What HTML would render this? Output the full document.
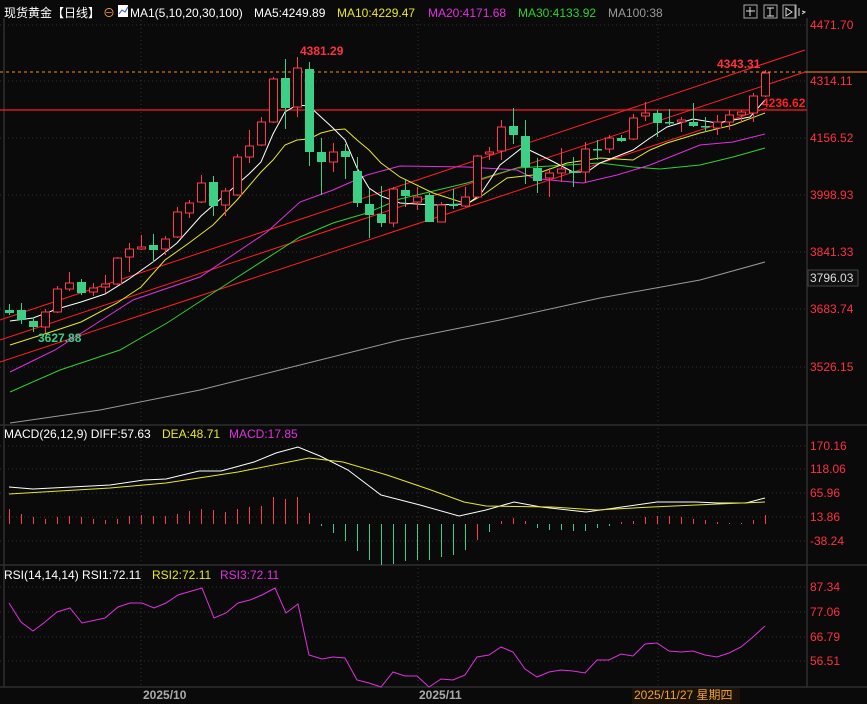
<!DOCTYPE html>
<html><head><meta charset="utf-8"><style>
html,body{margin:0;padding:0;background:#0a0a0a;width:867px;height:704px;overflow:hidden}
svg{display:block}
text{font-family:"Liberation Sans","Noto Sans CJK SC",sans-serif;font-size:12px}
</style></head><body>
<svg id="c" width="867" height="704" xmlns="http://www.w3.org/2000/svg">
<rect width="867" height="704" fill="#0a0a0a"/>
<g stroke="#333" stroke-dasharray="1,3" stroke-width="1">
<line x1="0" y1="25" x2="807" y2="25"/><line x1="0" y1="81" x2="807" y2="81"/><line x1="0" y1="138" x2="807" y2="138"/><line x1="0" y1="195" x2="807" y2="195"/><line x1="0" y1="252" x2="807" y2="252"/><line x1="0" y1="309" x2="807" y2="309"/><line x1="0" y1="367" x2="807" y2="367"/>
<line x1="0" y1="446" x2="807" y2="446"/><line x1="0" y1="469" x2="807" y2="469"/><line x1="0" y1="493" x2="807" y2="493"/><line x1="0" y1="517" x2="807" y2="517"/><line x1="0" y1="541" x2="807" y2="541"/>
<line x1="0" y1="587" x2="807" y2="587"/><line x1="0" y1="612" x2="807" y2="612"/><line x1="0" y1="637" x2="807" y2="637"/><line x1="0" y1="661" x2="807" y2="661"/>
<line x1="141" y1="20" x2="141" y2="687"/><line x1="418" y1="20" x2="418" y2="687"/><line x1="658" y1="20" x2="658" y2="687"/>
</g>
<g stroke="#2e2e2e" stroke-width="1.5"><line x1="0" y1="425" x2="867" y2="425"/><line x1="0" y1="565" x2="867" y2="565"/><line x1="0" y1="687" x2="867" y2="687"/><line x1="807" y1="18" x2="807" y2="687"/><line x1="4" y1="18" x2="4" y2="687"/></g>
<line x1="0" y1="72" x2="807" y2="72" stroke="#ff8c1a" stroke-dasharray="3,3"/>
<line x1="807" y1="72" x2="867" y2="72" stroke="#ff8c1a"/>
<line x1="0" y1="110" x2="807" y2="110" stroke="#ff1a1a" stroke-width="1.3"/>
<g stroke="#ff2020" stroke-width="1"><line x1="0" y1="320" x2="805" y2="50"/><line x1="0" y1="340" x2="805" y2="72"/><line x1="0" y1="362" x2="767" y2="108"/></g>
<g fill="none" stroke-width="1">
<polyline stroke="#9a9a9a" points="10,423 100,410 200,390 300,365 400,340 500,320 600,298 700,280 765,262"/>
<polyline stroke="#30d030" points="10,392 60,370 120,350 167,323 233,280 300,237 333,223 367,213 400,199 467,183 517,168 567,165 600,163 633,167 660,169 700,165 733,157 765,148"/>
<polyline stroke="#e030e0" points="10,372 55,350 133,300 200,277 267,232 300,202 333,190 367,175 400,166 467,167 517,170 533,178 550,180 583,183 617,175 650,165 700,145 733,142 765,134"/>
<polyline stroke="#e8e820" points="10,345 57,330 81,322 117,303 141,287 165,260 189,243 213,225 237,200 261,172 273,160 285,145 297,140 309,139 321,133 333,130 345,129 357,140 369,150 381,163 400,177 433,193 467,204 483,195 507,178 533,175 567,163 600,158 633,160 650,150 667,143 700,133 733,125 765,113"/>
<polyline stroke="#ffffff" points="10,321 33,318 57,309 81,302 105,294 129,279 153,262 177,243 201,216 225,195 249,174 261,162 273,134 285,112 297,105 309,106 321,117 333,128 345,140 357,168 369,188 381,196 400,203 433,205 467,204 480,195 500,165 523,147 550,160 573,172 587,172 600,163 633,150 650,138 667,127 693,119 717,123 750,117 765,100"/>
</g>
<g id="candles"></g>
<g id="hist"></g>
<g fill="none"><polyline stroke="#ffffff" points="9,487 33,489 110,485 144,480 166,479 199,471 221,471 254,462 276,453 298,447 320,456 348,470 381,495 420,505 459,516 486,510 514,502 541,507 586,512 608,509 657,502 696,502 718,503 746,503 765,498"/>
<polyline stroke="#e8e820" points="9,494 110,488 166,483 238,472 309,458 343,462 387,475 431,490 464,502 486,506 552,507 597,510 652,507 718,504 765,502"/>
<polyline stroke="#e030e0" points="9,603 21,622 33,631 45,622 57,612 70,608 82,623 105,618 118,607 130,603 142,603 154,608 166,603 178,595 202,588 214,618 226,613 238,603 250,600 262,595 275,588 286,613 298,604 309,655 322,659 333,657 345,658 357,680 369,683 381,687 393,672 405,676 417,676 429,687 441,679 453,680 465,675 477,657 489,655 501,647 513,652 525,669 537,677 549,672 561,670 573,671 585,673 597,660 609,660 621,654 633,656 645,644 657,643 669,651 681,652 693,651 705,655 717,657 729,653 741,647 753,637 765,626"/></g>
<g fill="#ff3040">
<text x="810" y="29">4471.70</text><text x="810" y="85">4314.11</text><text x="810" y="142">4156.52</text><text x="810" y="199">3998.93</text><text x="810" y="256">3841.33</text><text x="810" y="313">3683.74</text><text x="810" y="371">3526.15</text>
<text x="810" y="450">170.16</text><text x="810" y="473">118.06</text><text x="810" y="497">65.96</text><text x="810" y="521">13.86</text><text x="810" y="545">-38.24</text>
<text x="810" y="591">87.34</text><text x="810" y="616">77.06</text><text x="810" y="641">66.79</text><text x="810" y="665">56.51</text>
<text x="300" y="55" font-weight="bold">4381.29</text><text x="717" y="68" font-weight="bold">4343.31</text><text x="762" y="107" font-weight="bold" fill="#ff2020">4236.62</text>
</g>
<rect x="808" y="270" width="50" height="16" fill="#111" stroke="#444"/><text x="810" y="282" fill="#ddd">3796.03</text>
<text x="38" y="342" fill="#3ccf85" font-weight="bold">3627.88</text>
<text x="4" y="17" fill="#fff">现货黄金【日线】</text>
<text x="103" y="17" fill="#f0a030">⊖</text>
<rect x="118" y="5" width="10" height="12" fill="#fff"/><path d="M119 14 L122 10 L125 12 L128 7" stroke="#2050e0" fill="none"/>
<text x="130" y="17" fill="#fff">MA1(5,10,20,30,100)</text>
<text x="254" y="17" fill="#fff">MA5:4249.89</text>
<text x="337" y="17" fill="#e8e820">MA10:4229.47</text>
<text x="428" y="17" fill="#e030e0">MA20:4171.68</text>
<text x="518" y="17" fill="#30d030">MA30:4133.92</text>
<text x="608" y="17" fill="#9a9a9a">MA100:38</text>
<g stroke="#aaa" fill="none"><rect x="744" y="5" width="13" height="13"/><rect x="764" y="5" width="13" height="13"/><rect x="783" y="5" width="13" height="13"/><rect x="795" y="5" width="1" height="13"/></g>
<g stroke="#ddd" fill="none"><path d="M750 7v9M746 11h9"/><path d="M767 8h7M770 8v8M767 16h7"/><path d="M786 8v8l6-4z"/><path d="M799 8v8M802 11l3 1-3 2"/></g>
<text x="4" y="438" fill="#fff">MACD(26,12,9) DIFF:57.63</text><text x="162" y="438" fill="#e8e820">DEA:48.71</text><text x="229" y="438" fill="#e030e0">MACD:17.85</text>
<text x="4" y="579" fill="#fff">RSI(14,14,14) RSI1:72.11</text><text x="152" y="579" fill="#e8e820">RSI2:72.11</text><text x="220" y="579" fill="#e030e0">RSI3:72.11</text>
<text x="143" y="699" fill="#aaa" font-weight="bold">2025/10</text><text x="419" y="699" fill="#aaa" font-weight="bold">2025/11</text>
<rect x="632" y="688" width="108" height="16" fill="#1a1208"/><text x="634" y="699" fill="#f0a030">2025/11/27 星期四</text>
</svg>
<script>
var C=[[310,313,304,315],[310,320,303,324],[321,327,317,332],[327,312,309,333],[312,289,286,313],[289,283,272,291],[282,293,279,295],[292,288,283,296],[287,284,275,293],[284,258,257,285],[257,249,243,272],[249,247,235,250],[245,250,234,262],[249,239,236,255],[237,212,207,238],[213,203,200,218],[202,183,175,203],[182,206,176,216],[205,191,188,216],[195,157,154,196],[157,146,130,163],[145,122,117,146],[122,79,77,123],[78,108,59,129],[107,68,57,117],[69,152,62,166],[152,162,138,195],[162,152,143,172],[151,157,144,179],[171,203,157,207],[204,215,189,238],[214,223,186,227],[223,189,187,227],[190,196,180,207],[202,197,187,210],[195,222,193,222],[222,205,202,222],[204,206,189,209],[206,197,187,207],[197,156,155,198],[154,152,147,160],[151,127,120,160],[126,135,108,144],[136,167,120,184],[168,181,158,193],[178,173,168,197],[173,169,148,182],[171,173,157,187],[172,149,142,182],[149,150,140,160],[149,138,135,153],[138,141,135,142],[139,118,114,140],[116,113,102,121],[113,123,110,137],[122,123,109,125],[122,120,117,132],[122,126,103,127],[126,127,117,132],[128,122,115,135],[122,115,110,130],[115,112,110,122],[113,96,93,122],[96,73,70,97]];
var H=[15,10,7,5,7,8,7,5,4,5,8,9,8,8,10,13,15,14,12,15,17,18,27,25,27,11,-2,-9,-17,-27,-36,-41,-40,-37,-36,-36,-33,-31,-26,-16,-8,3,6,3,-4,-6,-6,-7,-7,-4,-2,2,3,7,8,8,7,5,4,2,1,1,4,9];
var ns="http://www.w3.org/2000/svg",g=document.getElementById("candles"),h=document.getElementById("hist");
function el(p,t,a){var e=document.createElementNS(ns,t);for(var k in a)e.setAttribute(k,a[k]);p.appendChild(e);}
C.forEach(function(c,i){var x=9+12*i,o=c[0],cl=c[1],up=cl<=o,col=up?"#ff3b4f":"#3ccf85",t=Math.min(o,cl),b=Math.max(o,cl);
el(g,"line",{x1:x+.5,x2:x+.5,y1:c[2],y2:t,stroke:col});el(g,"line",{x1:x+.5,x2:x+.5,y1:b,y2:c[3],stroke:col});
if(up)el(g,"rect",{x:x-3.5,y:t,width:8,height:Math.max(b-t,1),fill:"#0a0a0a",stroke:col});else el(g,"rect",{x:x-4,y:t,width:9,height:Math.max(b-t,1.5),fill:col});});
H.forEach(function(v,i){var x=9+12*i+.5,col=(v>0||i==39)?"#ff3b4f":"#3ccf85";el(h,"line",{x1:x,x2:x,y1:524,y2:524-v,stroke:col});});
</script>
</body></html>
